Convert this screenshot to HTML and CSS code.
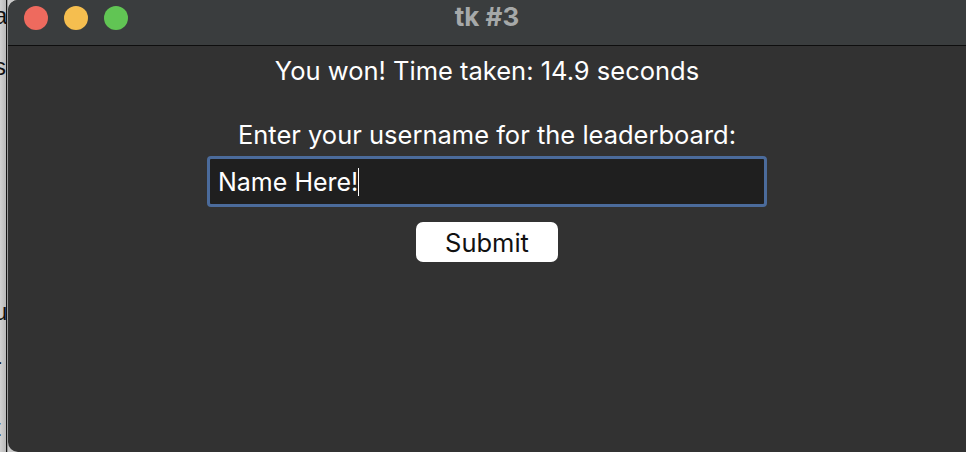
FILE: index.html
```html
<!DOCTYPE html>
<html>
<head>
<meta charset="utf-8">
<link rel="stylesheet" href="styles.css">
</head>
<body>
<div class="desk">
  <div class="behind">
    <div class="frag f1">a</div>
    <div class="frag f2">s</div>
    <div class="frag f3">u</div>
    <div class="frag f4">-</div>
    <div class="frag f5">:</div>
    <div class="frag f6">t</div>
  </div>
  <div class="edge"></div>
  <div class="window">
    <div class="titlebar">
      <div class="lights">
        <span class="light red"></span>
        <span class="light yellow"></span>
        <span class="light green"></span>
      </div>
      <div class="title">tk #3</div>
    </div>
    <div class="content">
      <div class="msg">You won! Time taken: 14.9 seconds</div>
      <div class="prompt">Enter your username for the leaderboard:</div>
      <div class="entry"><span class="entry-text">Name Here!</span><span class="caret"></span></div>
      <button class="submit">Submit</button>
    </div>
  </div>
</div>
</body>
</html>
```
FILE: styles.css
```css
html, body {
  margin: 0;
  padding: 0;
  width: 966px;
  height: 452px;
  overflow: hidden;
  background: #c9c9c9;
  font-family: Inter, "Noto Sans", "Liberation Sans", sans-serif;
}
.desk {
  display: flex;
  height: 452px;
}
.behind {
  width: 6px;
  overflow: hidden;
  background: linear-gradient(to right, #d2d2d2, #b9b9b9);
  display: flex;
  flex-direction: column;
  font-family: "Liberation Sans", sans-serif;
  font-size: 24px;
  color: #111;
}
.frag {
  width: 12px;
  margin-left: -6px;
  text-align: left;
  line-height: 24px;
  height: 24px;
}
.f1 { margin-top: 4px; }
.f2 { margin-top: 27px; }
.f3 { margin-top: 221px; }
.f4 { margin-top: 25px; }
.f5 { margin-top: 0px; }
.f6 { margin-top: 19px; }
.edge {
  width: 1px;
  background: #141414;
  border-right: 1px solid #9a9a9a;
}
.window {
  flex: 1;
  display: flex;
  flex-direction: column;
  background: #323232;
  border-top-left-radius: 10px;
  border-bottom-left-radius: 10px;
  overflow: hidden;
}
.titlebar {
  height: 45px;
  background: #3a3d3e;
  border-bottom: 1px solid #0e0e0e;
  display: flex;
  align-items: center;
  position: relative;
}
.lights {
  display: flex;
  gap: 16px;
  padding-left: 16px;
  margin-top: -10px;
}
.light {
  width: 24px;
  height: 24px;
  border-radius: 50%;
  display: block;
}
.red { background: #ee6a5e; }
.yellow { background: #f5be4f; }
.green { background: #61c554; }
.title {
  position: absolute;
  left: 0;
  right: 0;
  top: 1px;
  line-height: 32px;
  text-align: center;
  font-size: 26px;
  font-weight: 700;
  color: #a6a9a9;
}
.content {
  display: flex;
  flex-direction: column;
  align-items: center;
  color: #ffffff;
}
.msg {
  font-size: 25.5px;
  margin-top: 10px;
  line-height: 30px;
}
.prompt {
  font-size: 25.5px;
  margin-top: 34px;
  line-height: 30px;
}
.entry {
  box-sizing: border-box;
  margin-top: 6px;
  width: 560px;
  height: 51px;
  border: 3px solid #4b6b9b;
  border-radius: 4px;
  background: #1f1f1f;
  display: flex;
  align-items: center;
  padding-left: 8px;
  font-size: 25px;
  color: #ffffff;
}
.caret {
  width: 1px;
  height: 28px;
  background: #ffffff;
  margin-left: 0px;
}
.submit {
  margin-top: 15px;
  width: 142px;
  height: 40px;
  border: none;
  border-radius: 7px;
  background: #ffffff;
  color: #111111;
  font-family: inherit;
  font-size: 25.5px;
  padding: 0;
}
```
